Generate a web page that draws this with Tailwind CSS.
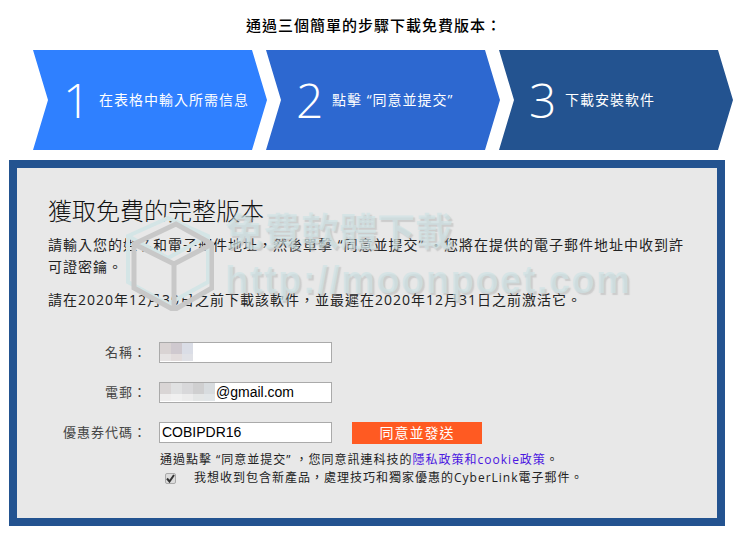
<!DOCTYPE html>
<html lang="zh-Hant">
<head>
    <meta charset="UTF-8" />
    <title>獲取免費的完整版本</title>
    <script src="https://cdn.jsdelivr.net/npm/@tailwindcss/browser@4"></script>
</head>
<body class="bg-white font-['Open_Sans','Noto_Sans_CJK_TC',sans-serif] text-[#222]">
    <div class="w-[740px] h-[534px] overflow-hidden">
        <h1 class="h-[50px] pt-[14px] pl-[8px] text-center text-[15px] leading-[22px] tracking-[1px] font-medium text-black">通過三個簡單的步驟下載免費版本：</h1>

        <!-- steps -->
        <div class="flex pl-[33px] h-[100px] text-white">
            <div class="w-[234px] shrink-0 flex items-center pl-[30px] bg-[#2f80ff] [clip-path:polygon(0_0,219px_0,234px_50%,219px_100%,0_100%,15px_50%)]">
                <span class="w-[36px] text-[48px] leading-none font-light">1</span>
                <span class="w-[150px] text-[14px] leading-[22px] tracking-[1px]">在表格中輸入所需信息</span>
            </div>
            <div class="w-[234px] shrink-0 -ml-[1px] flex items-center pl-[30px] bg-[#2d68d0] [clip-path:polygon(0_0,219px_0,234px_50%,219px_100%,0_100%,15px_50%)]">
                <span class="w-[36px] text-[48px] leading-none font-light">2</span>
                <span class="text-[14px] leading-[22px] tracking-[1px]">點擊 “同意並提交”</span>
            </div>
            <div class="w-[234px] shrink-0 -ml-[1px] flex items-center pl-[30px] bg-[#235390] [clip-path:polygon(0_0,219px_0,234px_50%,219px_100%,0_100%,15px_50%)]">
                <span class="w-[36px] text-[48px] leading-none font-light">3</span>
                <span class="text-[14px] leading-[22px] tracking-[1px]">下載安裝軟件</span>
            </div>
        </div>

        <!-- panel -->
        <div class="relative mt-[10px] ml-[9px] w-[716px] h-[366px] border-[8px] border-[#235390] bg-[#e8e8e8] pl-[31px] pt-[27px]">
            <h2 class="text-[24px] leading-[32px] font-light text-[#111]">獲取免費的完整版本</h2>
            <p class="mt-[7px] w-[650px] text-[14px] leading-[22px] tracking-[1px]">請輸入您的姓名和電子郵件地址，然後單擊 “同意並提交” ・您將在提供的電子郵件地址中收到許可證密鑰。</p>
            <p class="mt-[11px] text-[14px] leading-[22px] tracking-[1px]">請在2020年12月30日之前下載該軟件，並最遲在2020年12月31日之前激活它。</p>

            <form class="mt-[31px] flex flex-col gap-[19px]">
                <div class="flex items-center h-[21px]">
                    <label class="w-[100px] -ml-[1px] text-right text-[13px] tracking-[1px] text-[#444]">名稱：</label>
                    <div class="relative ml-[12px]">
                        <input type="text" class="block w-[173px] h-[21px] bg-white border border-[#aaa] px-[2px]" />
                        <div class="absolute left-[1px] top-[1px] grid grid-cols-[repeat(3,11px)] grid-rows-[11px_7px]">
                            <i class="bg-[#d9d3d3]"></i><i class="bg-[#cfc9cf]"></i><i class="bg-[#dadde6]"></i>
                            <i class="bg-[#e6e3e3]"></i><i class="bg-[#e2dcdc]"></i><i class="bg-[#e0e1e6]"></i>
                        </div>
                    </div>
                </div>
                <div class="flex items-center h-[21px]">
                    <label class="w-[100px] -ml-[1px] text-right text-[13px] tracking-[1px] text-[#444]">電郵：</label>
                    <div class="relative ml-[12px]">
                        <input type="text" value="@gmail.com" class="block w-[173px] h-[21px] bg-white border border-[#aaa] pl-[56px] font-['Liberation_Sans',sans-serif] text-[14px] text-black" />
                        <div class="absolute left-[1px] top-[1px] grid grid-cols-[repeat(5,11px)] grid-rows-[11px_7px]">
                            <i class="bg-[#d9d5d5]"></i><i class="bg-[#e0e1e2]"></i><i class="bg-[#d8d8da]"></i><i class="bg-[#cfcfd0]"></i><i class="bg-[#d8dcdf]"></i>
                            <i class="bg-[#eeeded]"></i><i class="bg-[#f0f0f0]"></i><i class="bg-[#ececec]"></i><i class="bg-[#e4e6e6]"></i><i class="bg-[#e2e6e8]"></i>
                        </div>
                    </div>
                </div>
                <div class="flex items-center h-[21px]">
                    <label class="w-[100px] -ml-[1px] text-right text-[13px] tracking-[1px] text-[#444]">優惠券代碼：</label>
                    <input type="text" value="COBIPDR16" class="block ml-[12px] w-[173px] h-[21px] bg-white border border-[#aaa] px-[2px] font-['Liberation_Sans',sans-serif] text-[14px] text-black" />
                    <button type="button" class="ml-[20px] w-[130px] h-[22px] bg-[#ff5a22] text-white text-[14px] leading-[22px] tracking-[1px]">同意並發送</button>
                </div>
                <div class="-mt-[11px] pl-[112px] text-[12px] leading-[18px] tracking-[1px]">
                    <p>通過點擊 “同意並提交” ，您同意訊連科技的<a class="text-[#4a16e0]">隱私政策和cookie政策</a>。</p>
                    <p class="flex items-center">
                        <span class="ml-[5px] mr-[18px] w-[11px] h-[11px] rounded-[2px] border border-[#aaa] bg-[#dcdcdc] flex items-center justify-center">
                            <svg width="9" height="9" viewBox="0 0 9 9"><path d="M1 4.5 L3.5 7.5 L8 1" fill="none" stroke="#333" stroke-width="2"/></svg>
                        </span>
                        我想收到包含新產品，處理技巧和獨家優惠的CyberLink電子郵件。
                    </p>
                </div>
            </form>

            <!-- watermark -->
            <div class="absolute left-[112px] top-[48px] w-[500px] h-[110px] pointer-events-none font-['Liberation_Sans','Noto_Sans_CJK_TC',sans-serif] font-bold text-[#cfe3e5]/70 [text-shadow:2px_2px_1px_rgba(170,170,170,0.45)]">
                <svg class="absolute -left-[5px] top-[0px]" width="90" height="95" viewBox="0 0 90 95" fill="none">
                    <path d="M4 20 L44 2 L84 20 L84 66 L44 88 L4 66 Z M4 20 L44 42 L84 20" stroke="#d4e5e6" stroke-width="4"/>
                    <path d="M10 28 L52 8 L88 28 L88 72 L50 94 L10 72 Z M10 28 L50 48 L88 28 M50 48 L50 94" stroke="#c8c8c8" stroke-width="5"/>
                </svg>
                <div class="absolute left-[96px] top-[-6px] text-[38px] leading-[44px] whitespace-nowrap">免費軟體下載</div>
                <div class="absolute left-[96px] top-[42px] text-[38px] leading-[44px] tracking-[1.5px] whitespace-nowrap">http://moonpoet.com</div>
            </div>
        </div>
    </div>
</body>
</html>
